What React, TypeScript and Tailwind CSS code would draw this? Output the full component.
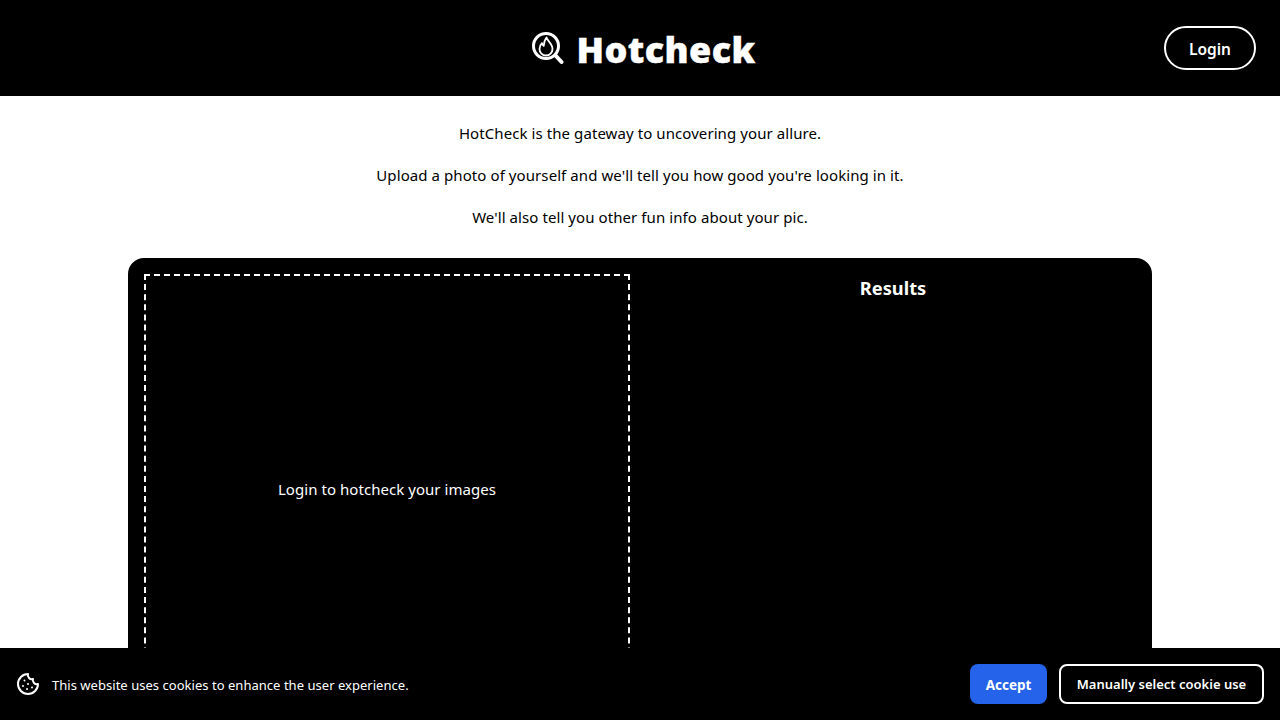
import { Cookie } from "lucide-react";

function Logo() {
  return (
    <svg className="mt-0.5" width="32" height="34" viewBox="0 0 32 34" fill="none" stroke="white" strokeLinecap="round" strokeLinejoin="round">
      <circle cx="14" cy="14" r="12.500" strokeWidth="3" />
      <path d="M24 24l5.500 6" strokeWidth="4" />
      <path
        d="M14.500 5.500c.5 3.200 6 5.800 6 11.500a6.500 6.500 0 0 1-13 0c0-2.400.8-4.300 2.400-5.900.3 1.400.9 2.300 1.800 2.800.3-3 .9-6.100 2.800-8.400z"
        strokeWidth="1.800"
      />
    </svg>
  );
}

export default function App() {
  return (
    <div className="min-h-screen bg-white font-['Noto_Sans','Open_Sans',sans-serif] text-black">
      <header className="relative flex h-24 items-center justify-center bg-black text-white">
        <div className="ml-[8px] flex items-center gap-[12px]">
          <Logo />
          <span className="pt-1 text-[36px] font-black leading-none tracking-[0.4px] [-webkit-text-stroke:0.4px_white]">Hotcheck</span>
        </div>
        <button className="absolute right-6 top-[26px] h-11 w-[92px] rounded-full border-2 border-white pt-1 text-[15.5px] font-semibold">
          Login
        </button>
      </header>

      <main className="flex flex-col items-center pt-[25px]">
        <div className="flex flex-col gap-[18px] text-center text-[15px] leading-6 tracking-[0.08px]">
          <p>HotCheck is the gateway to uncovering your allure.</p>
          <p>Upload a photo of yourself and we'll tell you how good you're looking in it.</p>
          <p>We'll also tell you other fun info about your pic.</p>
        </div>

        <section className="mt-[29px] grid w-[1024px] grid-cols-2 gap-5 rounded-2xl bg-black p-4 text-white">
          <div className="flex h-[430px] items-center justify-center border-2 border-dashed border-white text-[15px] tracking-[0.05px]">
            Login to hotcheck your images
          </div>
          <div>
            <h2 className="text-center text-[18.3px] font-bold leading-[28px]">Results</h2>
          </div>
        </section>
      </main>

      <div className="fixed inset-x-0 bottom-0 flex h-[72px] items-center justify-between bg-black px-4 text-white">
        <div className="flex items-center gap-3">
          <Cookie size={24} strokeWidth={2} />
          <span className="pt-1 text-[13px] tracking-[0.03px]">This website uses cookies to enhance the user experience.</span>
        </div>
        <div className="flex items-center gap-3">
          <button className="h-10 w-[77px] rounded-lg bg-[#2563eb] pt-0.5 text-[13.5px] font-bold">Accept</button>
          <button className="h-10 w-[205px] rounded-lg border-2 border-white pt-0.5 text-[13px] font-semibold">
            Manually select cookie use
          </button>
        </div>
      </div>
    </div>
  );
}
